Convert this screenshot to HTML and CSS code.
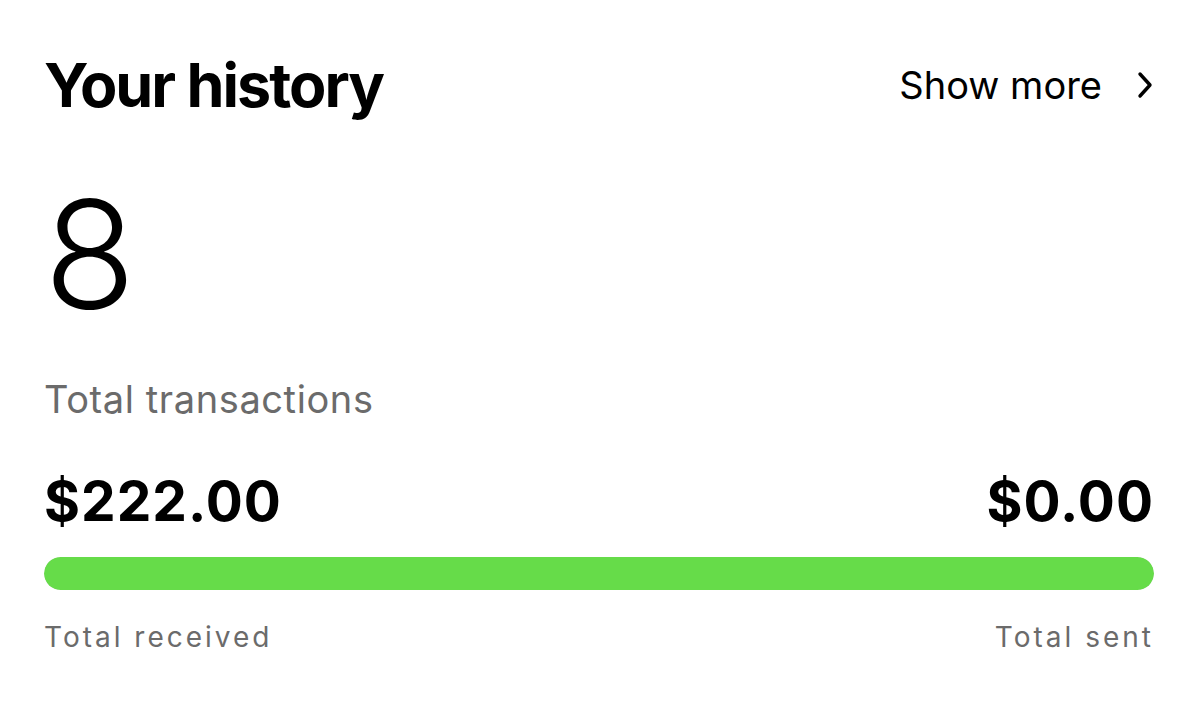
FILE: index.html
```html
<!DOCTYPE html>
<html>
<head>
<meta charset="utf-8">
<link rel="stylesheet" href="styles.css">
</head>
<body>
<main class="card">
  <header class="head">
    <h1 class="title">Your history</h1>
    <a class="more">Show more
      <svg class="chev" width="18" height="28" viewBox="0 0 18 28"><path d="M4 3 L14 14 L4 25" fill="none" stroke="#000" stroke-width="3.4" stroke-linecap="round" stroke-linejoin="round"/></svg>
    </a>
  </header>
  <div class="count">8</div>
  <div class="count-label">Total transactions</div>
  <div class="amounts">
    <span class="amt">$222.00</span>
    <span class="amt">$0.00</span>
  </div>
  <div class="bar"><div class="fill" style="width:100%"></div></div>
  <div class="labels">
    <span class="lbl">Total received</span>
    <span class="lbl">Total sent</span>
  </div>
</main>
</body>
</html>
```
FILE: styles.css
```css
html, body { margin: 0; padding: 0; background: #fff; }
body { font-family: Inter, "Liberation Sans", sans-serif; color: #000; }
.card { padding: 0 45px 0 44px; display: flex; flex-direction: column; }
.head { display: flex; justify-content: space-between; align-items: center; height: 170px; }
.title { margin: 0; font-size: 61px; font-weight: 700; letter-spacing: -2px; line-height: 1; }
.more { display: flex; align-items: center; gap: 34px; font-size: 38px; font-weight: 400; letter-spacing: 0; color: #000; }
.chev { display: block; }
.count { font-size: 150px; font-weight: 300; line-height: 1; margin-top: 10px; letter-spacing: -2px; }
.count-label { font-size: 38px; color: #6b6b6b; margin-top: 46px; letter-spacing: 0.6px; }
.amounts { display: flex; justify-content: space-between; margin-top: 52px; font-size: 55px; font-weight: 700; letter-spacing: 1px; line-height: 1; }
.bar { height: 33px; border-radius: 17px; background: #e6e6e6; margin-top: 28px; overflow: hidden; }
.fill { height: 100%; background: #66dc49; border-radius: 17px; }
.labels { display: flex; justify-content: space-between; margin-top: 30px; font-size: 28px; color: #6b6b6b; letter-spacing: 3px; }
```
